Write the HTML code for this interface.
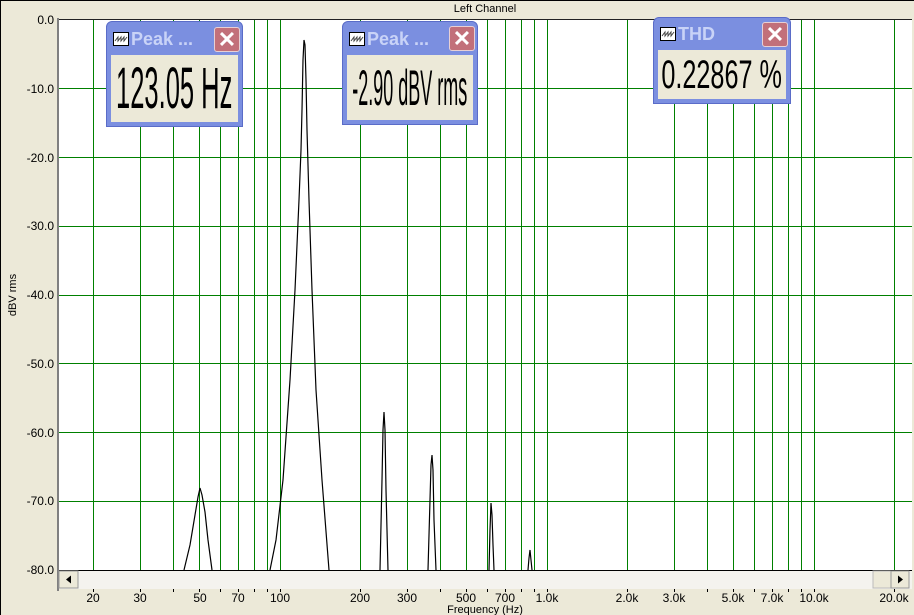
<!DOCTYPE html>
<html><head><meta charset="utf-8"><style>
body{margin:0;width:914px;height:615px;overflow:hidden;background:#ece9d8;font-family:"Liberation Sans",Arial,sans-serif;position:relative}
.win{position:absolute;background:#7b8fe0;border-radius:6px 6px 0 0;border:1px solid #5a6cc8;box-sizing:border-box}
.win .tt{position:absolute;left:24px;color:#c9d3f7;font-weight:bold;font-size:18px;white-space:nowrap}
.win .ic{position:absolute;left:6px;width:14px;height:12px;background:#fff;border:1px solid #000}
.win .cl{position:absolute;width:24px;height:23px;background:#c2707a;border:1px solid #e8d0d4;border-radius:3px;color:#fff;font-size:22px;font-weight:bold;text-align:center;line-height:23px}
.win .ct{position:absolute;left:4px;right:4px;bottom:4px;background:#ece9d8;color:#000;display:flex;align-items:center;justify-content:center;overflow:visible;white-space:nowrap}
.win .ct span{display:inline-block;white-space:nowrap;line-height:1}
</style></head><body>
<div style="position:absolute;left:0;top:0;width:1px;height:615px;background:#000"></div>
<div style="position:absolute;left:0;top:0;width:914px;height:1px;background:#000"></div>
<div style="position:absolute;left:0;top:3px;width:970px;text-align:center;font-size:11px">Left Channel</div>
<svg style="position:absolute;left:0;top:0" width="914" height="615">
<rect x="57" y="18" width="2" height="573" fill="#808080"/>
<rect x="59" y="19" width="853" height="552" fill="#fff"/>
<line x1="59" y1="19.5" x2="912" y2="19.5" stroke="#222"/>
<g stroke="#008000" stroke-width="1">
<path d="M93.5 20V570M140.5 20V570M173.5 20V570M199.5 20V570M220.5 20V570M238.5 20V570M254.5 20V570M267.5 20V570M280.5 20V570M360.5 20V570M407.5 20V570M440.5 20V570M466.5 20V570M487.5 20V570M505.5 20V570M521.5 20V570M534.5 20V570M547.5 20V570M627.5 20V570M674.5 20V570M707.5 20V570M733.5 20V570M754.5 20V570M772.5 20V570M788.5 20V570M801.5 20V570M814.5 20V570M894.5 20V570"/>
<path d="M59 88.5H912M59 157.5H912M59 226.5H912M59 295.5H912M59 363.5H912M59 432.5H912M59 501.5H912"/>
</g>
<line x1="59" y1="570.5" x2="912" y2="570.5" stroke="#000"/>
<g fill="none" stroke="#000" stroke-width="1.2">
<polyline points="184,570 190,545 195,515 198,497 200,488 202,495 205,512 208,540 212,570"/>
<polyline points="270,570 276,540 283,480 290,380 295,290 299,200 301,150 302,110 303,60 304,40 305,45 306,80 307,130 309,200 312,290 316,390 322,480 329,570"/>
<polyline points="380,570 382,480 383,430 384,412 385,430 386,490 388,570"/>
<polyline points="428,570 430,500 431,465 432,455 433,470 434,520 436,570"/>
<polyline points="489,570 490,530 491,503 492,515 493,545 494,570"/>
<polyline points="528,570 529,558 530,550 531,560 532,570"/>
</g>
<rect x="59" y="571" width="853" height="18" fill="#f4f3ee"/>
<rect x="59" y="571" width="19" height="17" fill="#ece9d8" stroke="#999"/>
<path d="M66 579.5l5-4v8z" fill="#000"/>
<rect x="873" y="571" width="18" height="17" fill="#ece9d8" stroke="#bbb"/>
<rect x="891" y="571" width="18" height="17" fill="#ece9d8" stroke="#999"/>
<path d="M903 579.5l-5-4v8z" fill="#000"/>
<g stroke="#000"><path d="M93.5 589v3M140.5 589v3M173.5 589v3M199.5 589v3M220.5 589v3M238.5 589v3M254.5 589v3M267.5 589v3M280.5 589v3M360.5 589v3M407.5 589v3M440.5 589v3M466.5 589v3M487.5 589v3M505.5 589v3M521.5 589v3M534.5 589v3M547.5 589v3M627.5 589v3M674.5 589v3M707.5 589v3M733.5 589v3M754.5 589v3M772.5 589v3M788.5 589v3M801.5 589v3M814.5 589v3M894.5 589v3"/></g>
<g font-size="12" text-anchor="middle" fill="#000" font-family="Liberation Sans,Arial,sans-serif">
<text x="93" y="602">20</text><text x="140" y="602">30</text><text x="200" y="602">50</text><text x="238" y="602">70</text><text x="280" y="602">100</text><text x="360" y="602">200</text><text x="407" y="602">300</text><text x="466" y="602">500</text><text x="505" y="602">700</text><text x="547" y="602">1.0k</text><text x="627" y="602">2.0k</text><text x="674" y="602">3.0k</text><text x="733" y="602">5.0k</text><text x="772" y="602">7.0k</text><text x="814" y="602">10.0k</text><text x="894" y="602">20.0k</text>
<text x="485" y="613" font-size="11">Frequency (Hz)</text>
</g>
<g font-size="12" text-anchor="end" fill="#000" font-family="Liberation Sans,Arial,sans-serif">
<text x="54" y="24">0.0</text><text x="54" y="93">-10.0</text><text x="54" y="162">-20.0</text><text x="54" y="230">-30.0</text><text x="54" y="299">-40.0</text><text x="54" y="368">-50.0</text><text x="54" y="437">-60.0</text><text x="54" y="505">-70.0</text><text x="54" y="574">-80.0</text>
</g>
<text x="16" y="295" font-size="11" text-anchor="middle" transform="rotate(-90 16 295)" font-family="Liberation Sans,Arial,sans-serif">dBV rms</text>
</svg>

<div class="win" style="left:106px;top:21px;width:137px;height:106px">
<div class="ic" style="top:10px"><svg width="14" height="12" style="position:absolute;left:0;top:0"><path d="M1 8l3-4v4l3-4v4l3-4v4l3-4" fill="none" stroke="#444"/></svg></div><div class="tt" style="top:7px">Peak ...</div>
<div class="cl" style="left:107px;top:5px">✕</div>
<div class="ct" style="top:33px"><span style="font-size:58px;transform:scaleX(0.44)">123.05 Hz</span></div>
</div>
<div class="win" style="left:342px;top:21px;width:136px;height:104px">
<div class="ic" style="top:10px"><svg width="14" height="12" style="position:absolute;left:0;top:0"><path d="M1 8l3-4v4l3-4v4l3-4v4l3-4" fill="none" stroke="#444"/></svg></div><div class="tt" style="top:7px">Peak ...</div>
<div class="cl" style="left:106px;top:4px">✕</div>
<div class="ct" style="top:33px"><span style="font-size:50px;transform:scaleX(0.36)">-2.90 dBV rms</span></div>
</div>
<div class="win" style="left:653px;top:17px;width:138px;height:87px">
<div class="ic" style="top:9px"><svg width="14" height="12" style="position:absolute;left:0;top:0"><path d="M1 8l3-4v4l3-4v4l3-4v4l3-4" fill="none" stroke="#444"/></svg></div><div class="tt" style="top:6px">THD</div>
<div class="cl" style="left:108px;top:4px">✕</div>
<div class="ct" style="top:32px"><span style="font-size:40px;transform:scaleX(0.63)">0.22867 %</span></div>
</div>
</body></html>
